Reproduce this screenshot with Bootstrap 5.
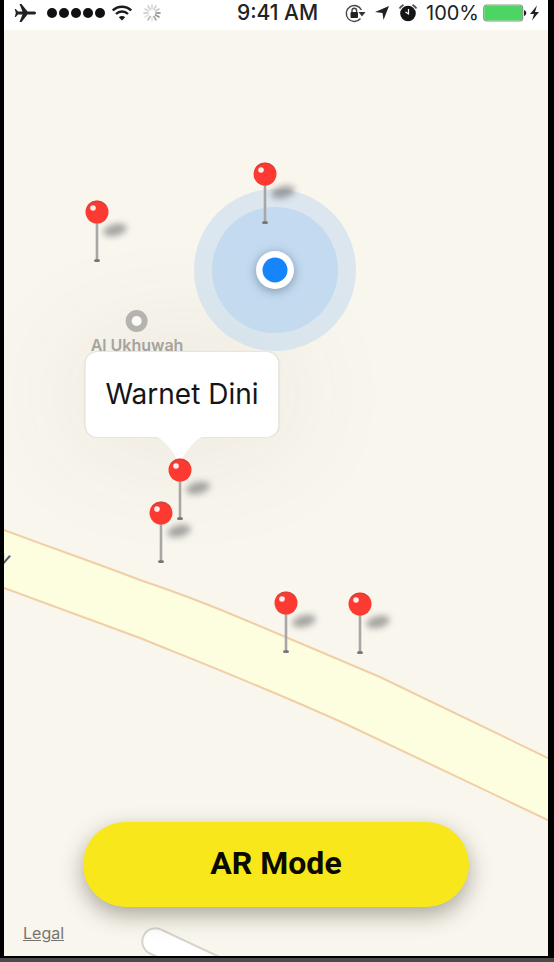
<!DOCTYPE html>
<html lang="en">
<head>
<meta charset="utf-8">
<meta name="viewport" content="width=device-width, initial-scale=1">
<title>Map</title>
<link href="https://cdn.jsdelivr.net/npm/bootstrap@5.3.0/dist/css/bootstrap.min.css" rel="stylesheet">
<style>
  body { background: #000; font-family: Inter, "Liberation Sans", sans-serif; }
  .phone { padding: 0 6px 0 4px; }
  .statusbar { height: 30px; padding: 0 7px 4px 10px; font-size: 20px; line-height: 24px; color: #222; }
  .statusbar svg { display: block; flex: none; }
  .clock { font-size: 21px; font-weight: 500; }
  .status-left { gap: 7px; }
  .status-right { gap: 4px; }
  .side { flex: 1 1 0; }
  .map { background: #f9f6ee; }
  .map-art { left: 0; top: 0; }
  .pin { width: 48px; height: 64px; margin: -12px 0 0 -12px; }
  .pin-a { left: 93px; top: 182px; }
  .pin-b { left: 261px; top: 144px; }
  .pin-c { left: 176px; top: 440px; }
  .pin-d { left: 157px; top: 483px; }
  .pin-e { left: 282px; top: 573px; }
  .pin-f { left: 356px; top: 574px; }
  .here { left: 190px; top: 159px; }
  .place { left: 133px; top: 280px; transform: translateX(-50%); gap: 5px; font-size: 16px; line-height: 16px; color: #a9a7a3; font-weight: 600; }
  .place-ring { width: 22px; height: 22px; border: 6px solid #b9b7b2; background: #fff; }
  .callout { left: 178px; top: 322px; transform: translateX(-50%); padding: 21px 20px; border-radius: 12px; font-size: 28px; line-height: 43px; color: #151515; box-shadow: 0 0 2px rgba(0,0,0,.15), 0 0 120px 10px rgba(90,80,50,.09); }
  .callout-tail { left: 69px; top: 100%; margin-top: -1px; }
  .street { left: -4px; top: 518px; font-size: 18px; font-weight: 500; line-height: 20px; color: #555; transform: rotate(20deg); }
  .map-foot { padding: 0 79px; }
  .btn-ar { --bs-btn-bg: #f7e71b; --bs-btn-color: #0b0a00; --bs-btn-hover-bg: #ecdc10; --bs-btn-hover-color: #000; --bs-btn-active-bg: #e2d20a; height: 85px; border: 0; padding: 0 0 4px; font: 700 32px/40px Roboto, sans-serif; box-shadow: 0 8px 22px rgba(60,55,40,.42); }
  .legal-row { height: 49px; padding: 16px 19px 0; font-size: 16px; line-height: 20px; }
  .legal-row a { color: #777570; }
  .home-edge { height: 6px; border-top: 2px solid #000; background: #4b4a4b; }
</style>
</head>
<body>
<div class="d-flex flex-column min-vh-100">
<div class="phone d-flex flex-column flex-grow-1">
  <header class="statusbar d-flex align-items-center bg-white">
    <div class="side status-left d-flex align-items-center">
      <svg width="24" height="20" viewBox="0 0 24 20" aria-label="Airplane mode"><path d="M22 10c0-1-1-1.500-2.500-1.500h-6L7.500 1H5.500l3 7.500H4L1.800 6H.8l1 4-1 4h1L4 11.500h4.500l-3 7.500h2l6-7.500h6c1.500 0 2.500-.5 2.500-1.500z" fill="#222"/></svg>
      <svg width="60" height="12" viewBox="0 0 60 12" fill="#111" aria-label="Signal"><circle cx="7" cy="6" r="5"/><circle cx="19" cy="6" r="5"/><circle cx="31" cy="6" r="5"/><circle cx="43" cy="6" r="5"/><circle cx="55" cy="6" r="5"/></svg>
      <svg width="20" height="16" viewBox="0 0 20 16" fill="none" stroke="#1c1c1c" stroke-width="2.400" aria-label="Wi-Fi"><path d="M.8 5.500a13 13 0 0 1 18.400 0M4 9a8.500 8.500 0 0 1 12 0"/><path d="M6.800 12.200a4.600 4.600 0 0 1 6.400 0L10 15.500z" fill="#1c1c1c" stroke="none"/></svg>
      <svg class="ms-1" width="18" height="18" viewBox="-9 -9 18 18" stroke="#777" stroke-width="1.600" stroke-linecap="round" aria-label="Loading"><path d="M0-4V-8" opacity=".3"/><path d="M2-3.500L4-7" opacity=".35"/><path d="M3.500-2L7-4" opacity=".4"/><path d="M4 0H8" opacity=".9"/><path d="M3.500 2L7 4" opacity=".8"/><path d="M2 3.500L4 7" opacity=".65"/><path d="M0 4V8" opacity=".2"/><path d="M-2 3.500L-4 7" opacity=".5"/><path d="M-3.500 2L-7 4" opacity=".2"/><path d="M-4 0H-8" opacity=".4"/><path d="M-3.500-2L-7-4" opacity=".3"/><path d="M-2-3.500L-4-7" opacity=".35"/></svg>
    </div>
    <div class="clock">9:41 AM</div>
    <div class="side status-right d-flex align-items-center justify-content-end">
      <svg width="21" height="20" viewBox="0 0 21 20" fill="none" stroke="#444" stroke-width="1.400" aria-label="Rotation lock"><path d="M15.500 15.500A8 8 0 1 1 16.500 7"/><path d="M13.500 9h7l-3.500 4.500z" fill="#333" stroke="none"/><rect x="5.500" y="9" width="7.500" height="6" rx="1" fill="#222" stroke="none"/><path d="M7 9V7.500a2.300 2.300 0 0 1 4.600 0V9"/></svg>
      <svg class="ms-1" width="16" height="16" viewBox="0 0 16 16" fill="#222" aria-label="Location"><path d="M15 1L9.500 15 8.500 8 1 7z"/></svg>
      <svg class="mx-1" width="20" height="20" viewBox="0 0 20 20" aria-label="Alarm"><circle cx="10" cy="10.500" r="7.800" fill="#151515"/><path d="M1.500 5.500a10 10 0 0 1 4-3.600M18.500 5.500a10 10 0 0 0-4-3.600" stroke="#555" stroke-width="1.800" fill="none"/><path d="M10.500 6v5L7.500 9" stroke="#fff" stroke-width="1.200" fill="none"/></svg>
      <span>100%</span>
      <svg width="58" height="18" viewBox="0 0 58 18" aria-label="Battery charging"><rect x=".7" y="1" width="39" height="16" rx="3" fill="#fff" stroke="#8a958a" stroke-width="1.200"/><rect x="1.300" y="1.600" width="37.800" height="14.800" rx="2.400" fill="#4cd562"/><path d="M41 6c3 1 3 5 0 6z" fill="#222"/><path d="M54 1.500L47 10h4l-2 6.500L56 8h-4z" fill="#222"/></svg>
    </div>
  </header>

  <main class="map position-relative overflow-hidden flex-grow-1 d-flex flex-column justify-content-end">
    <svg class="map-art position-absolute w-100 h-100" viewBox="0 0 544 926" preserveAspectRatio="xMinYMin slice" aria-hidden="true">
      <path d="M-4 499L0 500C50 519 90 532 136 550Q190 568 246 592T376 647L546 729V791L346 696C260 657 190 630 136 608L0 558L-4 557z" fill="#fdfde0" stroke="#f0cfa4" stroke-width="2"/>
      <path d="M224 931L158 900a13 13 0 0 0-13 23L162 931" fill="#fff" stroke="#d6d4cc" stroke-width="2"/>
    </svg>

    <div class="place position-absolute d-flex flex-column align-items-center text-nowrap"><span class="place-ring rounded-circle"></span>Al Ukhuwah</div>
    <div class="street position-absolute">y</div>

    <div class="callout position-absolute bg-white text-nowrap">Warnet Dini
      <svg class="callout-tail position-absolute" width="50" height="26" viewBox="0 0 50 26" aria-hidden="true"><path d="M0 0C7 2 11 7 16 13S22 24 25 24 29 19 34 13 43 2 50 0z" fill="#fff"/></svg>
    </div>

    <svg class="here position-absolute" width="162" height="162" viewBox="-81 -81 162 162" aria-label="Current location">
      <defs><filter id="dot-shadow" x="-60%" y="-60%" width="220%" height="220%"><feGaussianBlur stdDeviation="5"/></filter></defs>
      <circle r="81" fill="#c5daf0" fill-opacity=".58"/><circle r="63" fill="#bad5f0" fill-opacity=".72"/>
      <circle cy="2" r="20" fill="#4e6880" opacity=".5" filter="url(#dot-shadow)"/><circle r="19" fill="#fff"/><circle r="12.500" fill="#1684fb"/>
    </svg>

    <svg width="0" height="0" class="position-absolute" aria-hidden="true">
      <defs>
        <filter id="pin-blur" x="-50%" y="-80%" width="200%" height="260%"><feGaussianBlur stdDeviation="3"/></filter>
        <symbol id="pin" viewBox="0 0 48 64">
          <ellipse cx="30" cy="30" rx="12" ry="6" transform="rotate(-14 30 30)" fill="#555" opacity=".5" filter="url(#pin-blur)"/>
          <path d="M12 22V60" stroke="#a8a7a5" stroke-width="2.600"/>
          <ellipse cx="12" cy="60.500" rx="3" ry="1.600" fill="#777672"/>
          <circle cx="12" cy="12" r="11.500" fill="#fd3a31"/>
          <path d="M3.500 5.500a10.800 10.800 0 0 1 17 0" fill="none" stroke="#b94a42" stroke-width="1.400" opacity=".7"/>
          <circle cx="8" cy="8" r="2.800" fill="#fff" opacity=".9"/>
        </symbol>
      </defs>
    </svg>
    <svg class="pin pin-a position-absolute"><use href="#pin"/></svg>
    <svg class="pin pin-b position-absolute"><use href="#pin"/></svg>
    <svg class="pin pin-c position-absolute"><use href="#pin"/></svg>
    <svg class="pin pin-d position-absolute"><use href="#pin"/></svg>
    <svg class="pin pin-e position-absolute"><use href="#pin"/></svg>
    <svg class="pin pin-f position-absolute"><use href="#pin"/></svg>

    <div class="map-foot position-relative"><button type="button" class="btn btn-ar rounded-pill w-100">AR Mode</button></div>
    <div class="legal-row position-relative"><a href="#legal">Legal</a></div>
  </main>
</div>
<div class="home-edge"></div>
</div>
<script src="https://cdn.jsdelivr.net/npm/bootstrap@5.3.0/dist/js/bootstrap.bundle.min.js"></script>
</body>
</html>
